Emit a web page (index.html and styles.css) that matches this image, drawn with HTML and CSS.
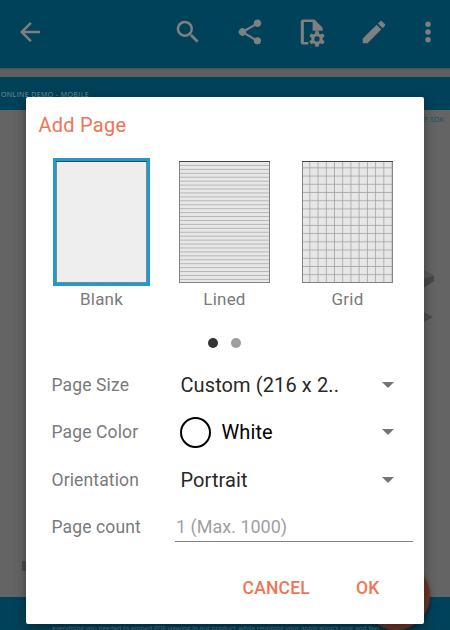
FILE: index.html
```
<!DOCTYPE html>
<html lang="en">
<head>
<meta charset="utf-8">
<title>Add Page</title>
<link rel="stylesheet" href="styles.css">
</head>
<body>
<div class="screen">
  <header class="toolbar">
    <svg class="icon back" viewBox="0 0 24 24"><path d="M20 11H7.800l5.600-5.600L12 4l-8 8 8 8 1.400-1.400L7.800 13H20z"/></svg>
    <svg class="icon" viewBox="0 0 24 24"><path d="M15.500 14h-.8l-.3-.3A6.500 6.500 0 1 0 13.700 14.400l.3.300v.8l5 5 1.500-1.500zM9.500 14a4.500 4.500 0 1 1 0-9 4.500 4.500 0 0 1 0 9z"/></svg>
    <svg class="icon" viewBox="0 0 24 24"><path d="M18 16.100c-.8 0-1.400.3-2 .8l-7.100-4.200a3 3 0 0 0 0-1.400L16 7.200A3 3 0 1 0 15 5l.1.700L8 9.800a3 3 0 1 0 0 4.400l7.100 4.200-.1.600a2.900 2.900 0 1 0 3-2.900z"/></svg>
    <svg class="icon" viewBox="0 0 24 24"><path fill-rule="evenodd" d="M5 2h9l6.500 6.500V11h-8V4H5.500v16H9v2H5a2 2 0 0 1-2-2V4a2 2 0 0 1 2-2z"/><g transform="translate(16 17.500)"><path d="M-1.300-6.300h2.600l.6 3h-3.800z"/><path transform="rotate(60)" d="M-1.300-6.300h2.600l.6 3h-3.800z"/><path transform="rotate(120)" d="M-1.300-6.300h2.600l.6 3h-3.800z"/><path transform="rotate(180)" d="M-1.300-6.300h2.600l.6 3h-3.800z"/><path transform="rotate(240)" d="M-1.300-6.300h2.600l.6 3h-3.800z"/><path transform="rotate(300)" d="M-1.300-6.300h2.600l.6 3h-3.800z"/><circle class="gear" r="3.300"/></g></svg>
    <svg class="icon" viewBox="0 0 24 24"><path d="M3 17.200V21h3.800L17.800 9.900l-3.700-3.700zM20.700 7a1 1 0 0 0 0-1.400l-2.300-2.300a1 1 0 0 0-1.400 0l-1.900 1.800 3.800 3.800z"/></svg>
    <svg class="icon more" viewBox="0 0 24 24"><circle cx="12" cy="5.800" r="2.200"/><circle cx="12" cy="12" r="2.200"/><circle cx="12" cy="18.200" r="2.200"/></svg>
  </header>
  <div class="banner">ONLINE DEMO - MOBILE</div>
  <main class="document"><span class="sdk">PDF SDK</span></main>
  <footer class="footer">everything you needed to embed PDF viewing in our product, while retaining your application's look and feel</footer>
  <svg class="art" viewBox="0 0 30 60"><path fill="#484848" d="M10 4l12 7v5l-12 8z"/><path fill="#595959" d="M10 4l11 7-11 4z"/><path fill="#4c4c4c" d="M10 46l11 6-11 6z"/></svg>
  <div class="mark"></div>
  <div class="fab"></div>
  <section class="dialog">
    <h1>Add Page</h1>
    <div class="templates">
      <div class="template"><div class="thumb selected"><svg width="91" height="122"><rect class="paper blank" width="91" height="122"/><path class="edge" d="M.5 0V122M90.500 0V122M0 121.500H91"/><path class="top" d="M0 .5H91"/></svg></div><span>Blank</span></div>
      <div class="template"><div class="thumb"><svg width="91" height="122"><defs><pattern id="lines" y="1" width="91" height="3.930" patternUnits="userSpaceOnUse"><path class="rule" d="M0 3.400H91"/></pattern></defs><rect class="paper" width="91" height="122"/><rect width="91" height="122" fill="url(#lines)"/><path class="edge" d="M.5 0V122M90.500 0V122M0 121.500H91"/><path class="top" d="M0 .5H91"/></svg></div><span>Lined</span></div>
      <div class="template"><div class="thumb"><svg width="91" height="122"><defs><pattern id="grid" x=".1" y="-.9" width="8.220" height="8.220" patternUnits="userSpaceOnUse"><path class="cell" d="M0 7.700H8.220M7.700 0V8.250"/></pattern></defs><rect class="paper" width="91" height="122"/><rect width="91" height="122" fill="url(#grid)"/><path class="edge" d="M.5 0V122M90.500 0V122M0 121.500H91"/><path class="top" d="M0 .5H91"/></svg></div><span>Grid</span></div>
    </div>
    <div class="dots"><i class="dot active"></i><i class="dot"></i></div>
    <div class="form">
      <div class="row"><label>Page Size</label><div class="value size">Custom (216 x 2..</div><i class="caret"></i></div>
      <div class="row"><label>Page Color</label><div class="value color"><i class="swatch"></i>White</div><i class="caret"></i></div>
      <div class="row"><label>Orientation</label><div class="value">Portrait</div><i class="caret"></i></div>
      <div class="row"><label>Page count</label><div class="input">1 (Max. 1000)</div></div>
    </div>
    <div class="actions"><span>CANCEL</span><span>OK</span></div>
  </section>
</div>
</body>
</html>
```
FILE: styles.css
```
* { box-sizing: border-box; }
body { margin: 0; font-family: Roboto, sans-serif; }
.screen { position: relative; width: 450px; height: 630px; overflow: hidden; background: #606060; display: flex; flex-direction: column; }
.toolbar { height: 68px; flex: none; background: #00425a; display: flex; align-items: center; padding: 0 8px 4px 15px; gap: 32px; box-shadow: 0 1px 1px #4b5558; }
.icon { width: 30px; height: 30px; fill: #7f7f7f; flex: none; }
.back { margin-right: 96px; }
.more { margin-left: -8px; }
.gear { fill: none; stroke: #7f7f7f; stroke-width: 2.4; }
.banner { height: 33px; flex: none; margin-top: 9px; background: #00425a; color: #7997a3; font: 7px/36px "Open Sans", sans-serif; letter-spacing: .42px; padding-left: 1px; }
.document { flex: 1; padding: 3px 6px; text-align: right; font: 7.500px/12px "Open Sans", sans-serif; color: #164f65; background: #646464; }
.footer { height: 33px; flex: none; background: #00425a; color: #557784; font: 6.500px/9px "Open Sans", sans-serif; padding: 27px 0 0 52px; white-space: nowrap; overflow: hidden; }
.art { position: absolute; left: 412px; top: 265px; width: 30px; height: 60px; }
.mark { position: absolute; left: 22px; top: 561px; width: 6px; height: 10px; background: #4a4a4a; }
.fab { position: absolute; left: 362px; top: 562px; width: 68px; height: 68px; border-radius: 50%; background: #6c3526; box-shadow: 0 2px 5px #0006; }
.dialog { position: absolute; left: 26px; top: 97px; width: 397.500px; height: 527px; background: #fff; border-radius: 2px; box-shadow: 0 3px 12px #0006; display: flex; flex-direction: column; }
h1 { margin: 0; padding: 16px 0 0 12.500px; font-size: 20px; line-height: 24px; font-weight: 400; color: #f07454; letter-spacing: .25px; }
.templates { display: flex; margin: 21px 0 0 27px; gap: 26px; height: 152px; }
.template { width: 97px; display: flex; flex-direction: column; align-items: center; font-size: 17px; line-height: 20px; color: #7a7a7a; letter-spacing: .2px; }
.thumb { width: 97px; height: 128px; padding: 3px; flex: none; margin-bottom: 3px; }
.thumb svg { display: block; }
.selected { background: #1c9bd3; }
.paper { fill: #e7e7e7; }
.blank { fill: #eee; }
.edge { stroke: #858585; fill: none; }
.top { stroke: #444; }
.rule { stroke: #b5b5b5; }
.cell { stroke: #a0a0a0; fill: none; stroke-width: .8; }
.dots { display: flex; justify-content: center; gap: 13px; margin: 28px 0 0; height: 10px; }
.dot { width: 10px; height: 10px; border-radius: 50%; background: #9e9e9e; }
.active { background: #333; }
.form { margin-top: 13px; }
.row { height: 47.500px; display: flex; align-items: center; padding: 0 10px 0 25.500px; }
label { width: 129px; font-size: 17.500px; color: #7a7a7a; letter-spacing: .13px; }
.value { flex: 1; font-size: 20px; letter-spacing: .1px; color: #282828; display: flex; align-items: center; white-space: nowrap; }
.color { color: #000; }
.swatch { width: 31px; height: 31px; border: 2px solid #000; border-radius: 50%; margin: 0 11px 0 -1px; }
.caret { border: 6px solid transparent; border-top-color: #757575; border-bottom: 0; margin-right: 20px; }
.input { width: 238px; margin: -2px 0 0 -5.500px; height: 31px; line-height: 31px; border-bottom: 1px solid #858585; font-size: 18px; color: #a0a0a0; padding-left: 1px; }
.actions { display: flex; justify-content: flex-end; gap: 46px; padding: 27px 44px 0 0; font-size: 17.500px; line-height: 20px; font-weight: 500; color: #ef7655; letter-spacing: .2px; }
```
